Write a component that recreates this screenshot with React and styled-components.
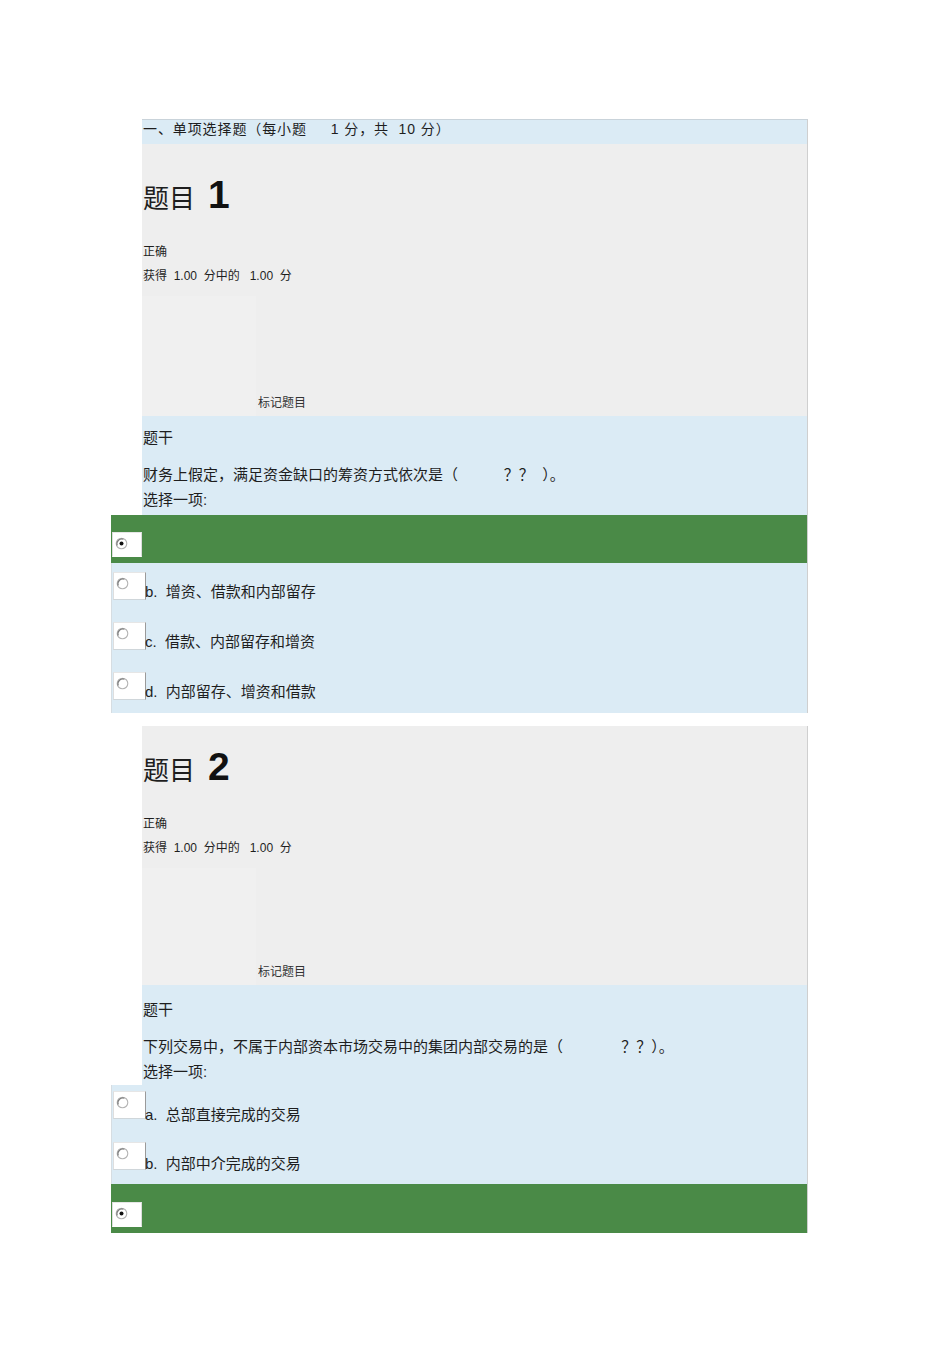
import React from "react";
import styled, { createGlobalStyle } from "styled-components";

const GlobalStyle = createGlobalStyle`
  html, body { margin: 0; padding: 0; background: #ffffff; }
  body {
    font-family: "Liberation Sans", "Noto Sans CJK SC", sans-serif;
    color: #1e1e1e;
  }
`;

const Page = styled.main`
  padding: 119px 0 80px 111px;
  width: 697px;
`;

const Quiz = styled.section`
  margin-top: ${(p) => p.$gap || 0}px;
`;

const SectionHeader = styled.div`
  margin-left: 31px;
  height: 24px;
  background: #dbebf5;
  border-top: 1px solid #c9d3da;
  border-right: 1px solid #cfcfcf;
  font-size: 14px;
  letter-spacing: 0.9px;
  line-height: 18px;
  padding-left: 1px;
  white-space: pre;
`;

const InfoPanel = styled.div`
  margin-left: 31px;
  height: ${(p) => p.$height}px;
  box-sizing: border-box;
  padding-top: ${(p) => p.$top}px;
  background: #eeeeee;
  border-right: 1px solid #cfcfcf;
  display: flex;
  flex-direction: column;
`;

const Title = styled.h3`
  margin: 0;
  font-weight: normal;
  font-size: 26px;
  line-height: 42px;
  display: flex;
  align-items: baseline;
  gap: 13px;
  padding-left: 1px;
`;

const TitleNum = styled.span`
  font-family: "Liberation Sans", sans-serif;
  font-weight: bold;
  font-size: 39px;
  color: #111;
`;

const Meta = styled.div`
  font-size: 12px;
  line-height: 16px;
  margin-top: ${(p) => p.$mt}px;
  padding-left: 1px;
  white-space: pre;
`;

const MarkArea = styled.div`
  flex: 1;
  margin-top: 12px;
  display: flex;
  align-items: flex-end;
  padding-bottom: 5px;
`;

const MarkShade = styled.div`
  align-self: stretch;
  width: 114px;
  margin-bottom: -5px;
  background: #f0f0f0;
`;

const MarkLabel = styled.span`
  font-size: 12px;
  line-height: 16px;
  color: #333;
  margin-left: 2px;
`;

const QuestionPanel = styled.div`
  margin-left: 31px;
  height: ${(p) => p.$height}px;
  box-sizing: border-box;
  background: #dbebf5;
  border-right: 1px solid #cfcfcf;
  padding: ${(p) => p.$top}px 0 0 1px;
  font-size: 15px;
  line-height: 20px;
`;

const Stem = styled.div`
  margin-bottom: 17px;
`;

const QText = styled.div`
  white-space: pre;
`;

const Prompt = styled.div`
  margin-top: 5px;
`;

const Answers = styled.div`
  background: #dbebf5;
  border-left: 1px solid #d6dde2;
  border-right: 1px solid #cfcfcf;
`;

const GreenRow = styled.div`
  height: ${(p) => p.$height}px;
  box-sizing: border-box;
  background: #4a8a47;
  padding: ${(p) => p.$top}px 0 0 1px;
  margin-left: -1px;
`;

const OptionRow = styled.div`
  height: ${(p) => p.$height || 50}px;
  box-sizing: border-box;
  display: flex;
  align-items: flex-start;
  padding-left: 1px;
`;

const RadioBox = styled.div`
  box-sizing: border-box;
  width: ${(p) => (p.$selected ? 30 : 33)}px;
  height: ${(p) => (p.$selected ? 25 : 28)}px;
  margin-top: ${(p) => p.$mt || 0}px;
  background: #ffffff;
  border-top: 1px solid #e6e6e6;
  border-left: 1px solid #dedede;
  border-bottom: 1px solid ${(p) => (p.$selected ? "#ffffff" : "#cfd6da")};
  border-right: 1px solid ${(p) => (p.$selected ? "#dcdcdc" : "#9a9a9a")};
  padding: 3px 0 0 2px;
`;

const OptionLabel = styled.span`
  font-size: 15px;
  line-height: 20px;
  margin-top: ${(p) => p.$mt}px;
  margin-left: -1px;
  white-space: pre;
`;

function Radio({ checked }) {
  return (
    <svg width="13" height="13" viewBox="0 0 13 13">
      <circle cx="6.5" cy="6.5" r="5.3" fill="#fff" stroke="#b5b5b5" strokeWidth="1.1" />
      <path d="M2.2 8.5 A5 5 0 0 1 8.5 2.2" fill="none" stroke="#7a7a7a" strokeWidth="1.2" />
      {checked && <circle cx="6.5" cy="6.5" r="2" fill="#111" />}
    </svg>
  );
}

function Info({ n, height, top }) {
  return (
    <InfoPanel $height={height} $top={top}>
      <Title>
        题目<TitleNum>{n}</TitleNum>
      </Title>
      <Meta $mt={24}>正确</Meta>
      <Meta $mt={8}>{"获得  1.00  分中的   1.00  分"}</Meta>
      <MarkArea>
        <MarkShade />
        <MarkLabel>标记题目</MarkLabel>
      </MarkArea>
    </InfoPanel>
  );
}

function Option({ letter, text, mt = 9, labelMt = 19, height }) {
  return (
    <OptionRow $height={height}>
      <RadioBox $mt={mt}>
        <Radio />
      </RadioBox>
      <OptionLabel $mt={labelMt}>{`${letter}.  ${text}`}</OptionLabel>
    </OptionRow>
  );
}

function Selected({ height, top }) {
  return (
    <GreenRow $height={height} $top={top}>
      <RadioBox $selected>
        <Radio checked />
      </RadioBox>
    </GreenRow>
  );
}

export default function App() {
  return (
    <>
      <GlobalStyle />
      <Page>
        <Quiz>
          <SectionHeader>{"一、单项选择题（每小题     1 分，共  10 分）"}</SectionHeader>
          <Info n="1" height={272} top={30} />
          <QuestionPanel $height={99} $top={12}>
            <Stem>题干</Stem>
            <QText>{"财务上假定，满足资金缺口的筹资方式依次是（           ？？  ）。"}</QText>
            <Prompt>选择一项:</Prompt>
          </QuestionPanel>
          <Answers>
            <Selected height={48} top={17} />
            <Option letter="b" text="增资、借款和内部留存" />
            <Option letter="c" text="借款、内部留存和增资" />
            <Option letter="d" text="内部留存、增资和借款" />
          </Answers>
        </Quiz>
        <Quiz $gap={13}>
          <Info n="2" height={259} top={20} />
          <QuestionPanel $height={100} $top={15}>
            <Stem>题干</Stem>
            <QText>{"下列交易中，不属于内部资本市场交易中的集团内部交易的是（              ？？）。"}</QText>
            <Prompt>选择一项:</Prompt>
          </QuestionPanel>
          <Answers>
            <Option letter="a" text="总部直接完成的交易" mt={6} labelMt={20} height={49} />
            <Option letter="b" text="内部中介完成的交易" mt={8} labelMt={20} />
            <Selected height={49} top={18} />
          </Answers>
        </Quiz>
      </Page>
    </>
  );
}
